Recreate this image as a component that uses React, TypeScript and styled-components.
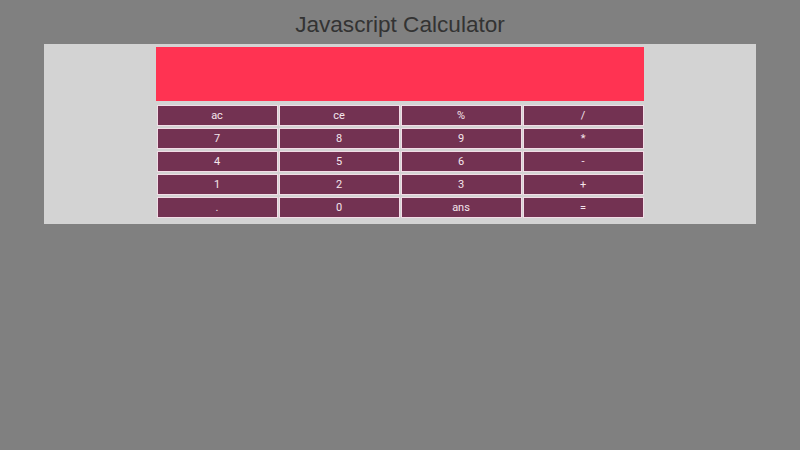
import styled, { createGlobalStyle } from "styled-components";

const GlobalStyle = createGlobalStyle`
  body {
    margin: 0;
    background: #808080;
    font-family: "Liberation Sans", Arial, sans-serif;
  }
`;

const Title = styled.h1`
  box-sizing: border-box;
  margin: 0;
  height: 44px;
  padding-top: 6px;
  display: flex;
  align-items: center;
  justify-content: center;
  font-size: 22.6px;
  font-weight: normal;
  color: #333333;
`;

const Panel = styled.div`
  margin: 0 44px;
  padding: 3px 0 6px;
  background: #d3d3d3;
`;

const Display = styled.div`
  width: 488px;
  height: 54px;
  margin: 0 auto 4px;
  background: #ff3352;
`;

const Keys = styled.div`
  width: 487px;
  margin: 0 auto;
  display: grid;
  grid-template-columns: repeat(4, 121px);
  grid-auto-rows: 21px;
  column-gap: 1px;
  row-gap: 2px;
`;

const Key = styled.button`
  margin: 0;
  padding: 0;
  border: 1px solid #f2dce6;
  border-radius: 0;
  background: #733252;
  color: #f4e6ec;
  font-family: Roboto, "Liberation Sans", sans-serif;
  font-size: 11px;
  cursor: pointer;
`;

const keys = [
  "ac", "ce", "%", "/",
  "7", "8", "9", "*",
  "4", "5", "6", "-",
  "1", "2", "3", "+",
  ".", "0", "ans", "=",
];

const App = () => {
  return (
    <>
      <GlobalStyle />
      <Title>Javascript Calculator</Title>
      <Panel>
        <Display />
        <Keys>
          {keys.map((k) => (
            <Key key={k}>{k}</Key>
          ))}
        </Keys>
      </Panel>
    </>
  );
};

export default App;
